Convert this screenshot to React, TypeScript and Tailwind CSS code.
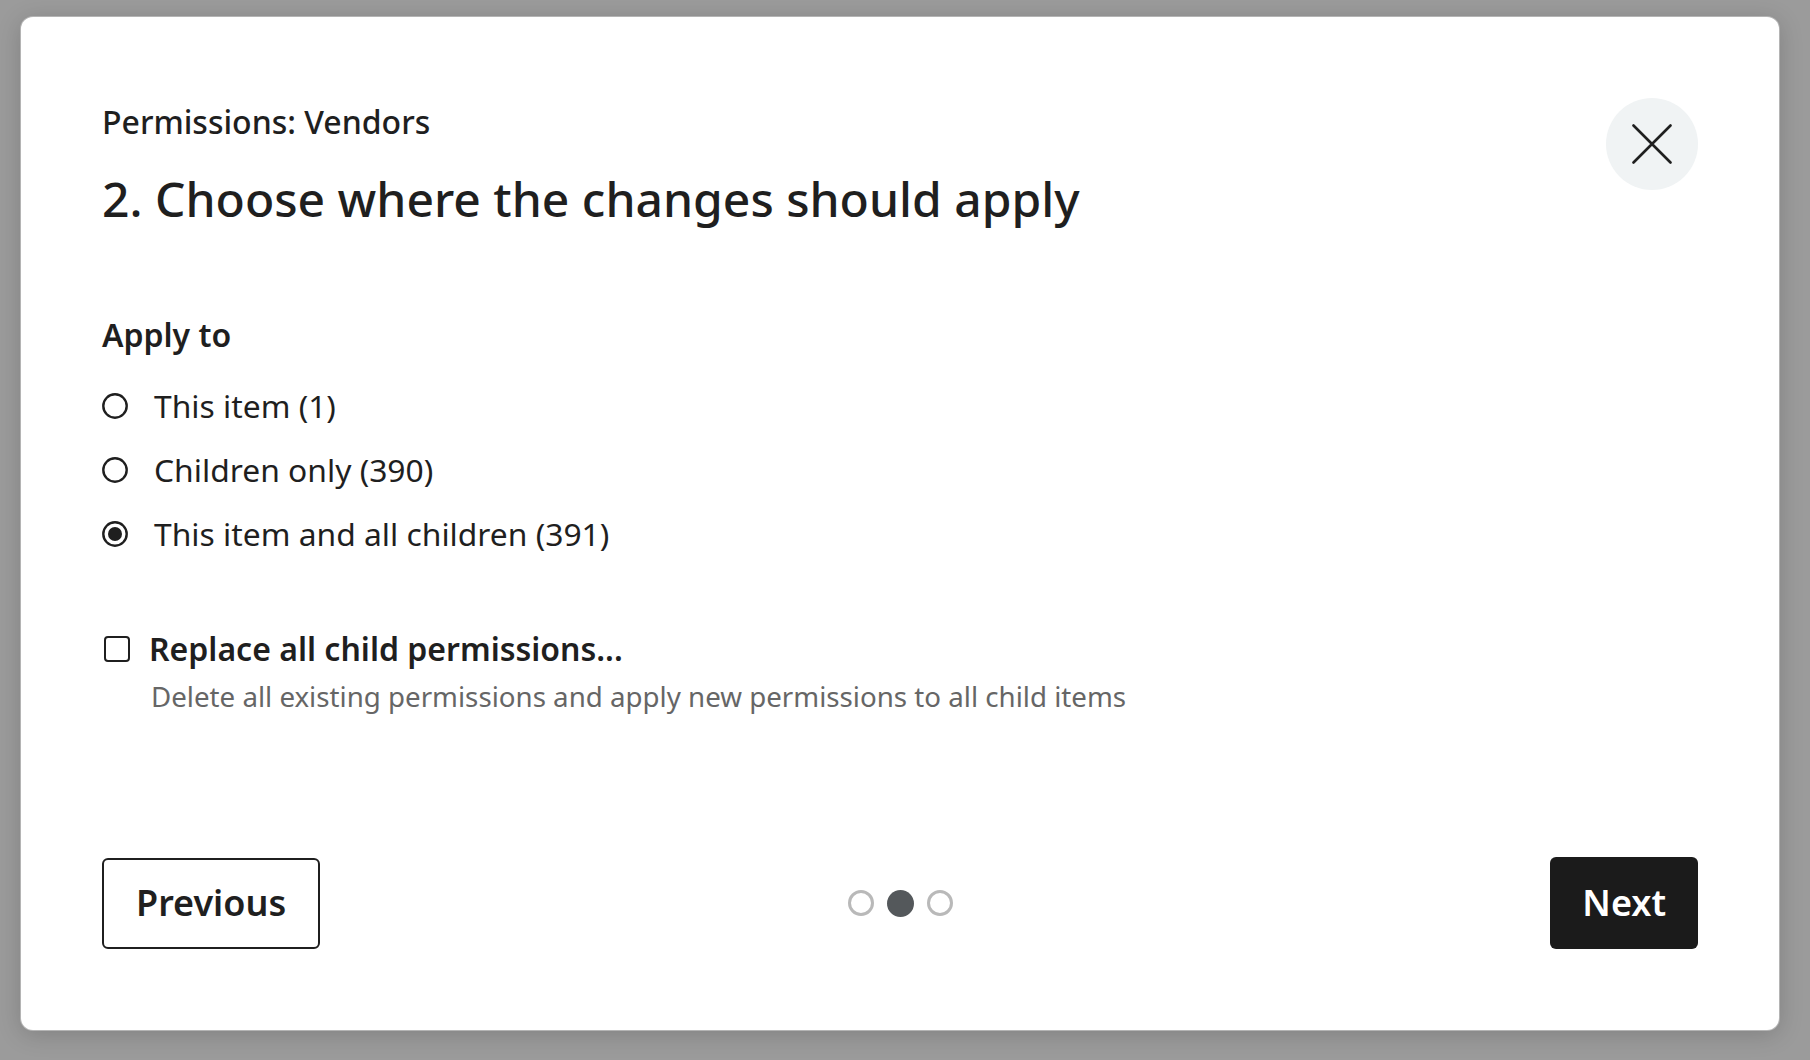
import React from "react";

function Radio({ checked }: { checked?: boolean }) {
  return (
    <svg width="26" height="26" viewBox="0 0 26 26" className="shrink-0">
      <circle cx="13" cy="13" r="11.7" fill="none" stroke="#1f1f1f" strokeWidth="2.4" />
      {checked && <circle cx="13" cy="13" r="7" fill="#1f1f1f" />}
    </svg>
  );
}

function RadioRow({ label, checked }: { label: string; checked?: boolean }) {
  return (
    <label className="flex items-center gap-[26px] h-[48px] cursor-pointer">
      <Radio checked={checked} />
      <span className="text-[31.8px] leading-[48px] text-[#1f1f1f]">{label}</span>
    </label>
  );
}

export default function App() {
  return (
    <div
      className="w-full h-screen bg-[#9b9b9b] flex pt-[17px] pl-[21px] pr-[31px] pb-[30px]"
      style={{ fontFamily: '"Noto Sans", "Open Sans", sans-serif' }}
    >
      <div className="flex-1 flex flex-col bg-white rounded-[12px] ring-1 ring-[#b4b4b4] shadow-[0_4px_24px_rgba(0,0,0,0.18)] p-[81px]">
        <div className="flex justify-between items-start">
          <div className="flex flex-col">
            <div className="text-[32px] leading-[48px] font-medium text-[#1f1f1f]">
              Permissions: Vendors
            </div>
            <h1 className="mt-[21px] text-[48px] leading-[64px] font-medium text-[#1f1f1f]">
              2. Choose where the changes should apply
            </h1>
          </div>
          <button className="w-[92px] h-[92px] rounded-full bg-[#f0f3f4] flex items-center justify-center">
            <svg width="40" height="40" viewBox="0 0 40 40">
              <path d="M1.5 1.5 L38.5 38.5 M38.5 1.5 L1.5 38.5" stroke="#1f1f1f" strokeWidth="2.6" strokeLinecap="round" />
            </svg>
          </button>
        </div>

        <div className="mt-[80px] text-[32px] leading-[48px] font-semibold text-[#1f1f1f]">
          Apply to
        </div>
        <div className="mt-[23px] flex flex-col gap-[16px]">
          <RadioRow label="This item (1)" />
          <RadioRow label="Children only (390)" />
          <RadioRow label="This item and all children (391)" checked />
        </div>

        <div className="mt-[67px] flex flex-col">
          <label className="flex items-center gap-[19px] h-[48px] cursor-pointer">
            <span className="ml-[2px] w-[26px] h-[26px] rounded-[4px] border-[2.5px] border-[#1f1f1f] shrink-0" />
            <span className="text-[32px] leading-[48px] font-semibold text-[#1f1f1f]">
              Replace all child permissions...
            </span>
          </label>
          <div className="mt-[3px] pl-[49px] text-[27.7px] leading-[40px] text-[#666666]">
            Delete all existing permissions and apply new permissions to all child items
          </div>
        </div>

        <div className="mt-auto grid grid-cols-[1fr_auto_1fr] items-center">
          <div className="flex">
            <button className="h-[91px] px-[32px] border-[2px] border-[#1f1f1f] rounded-[6px] bg-white text-[36px] font-semibold text-[#1f1f1f]">
              Previous
            </button>
          </div>
          <div className="flex items-center gap-[13px]">
            <span className="w-[26px] h-[26px] rounded-full border-[3px] border-[#b9b9b9]" />
            <span className="w-[27px] h-[27px] rounded-full bg-[#54585b]" />
            <span className="w-[26px] h-[26px] rounded-full border-[3px] border-[#b9b9b9]" />
          </div>
          <div className="flex justify-end">
            <button className="h-[92px] px-[32px] rounded-[6px] bg-[#1b1b1b] text-[36px] font-semibold text-white">
              Next
            </button>
          </div>
        </div>
      </div>
    </div>
  );
}
